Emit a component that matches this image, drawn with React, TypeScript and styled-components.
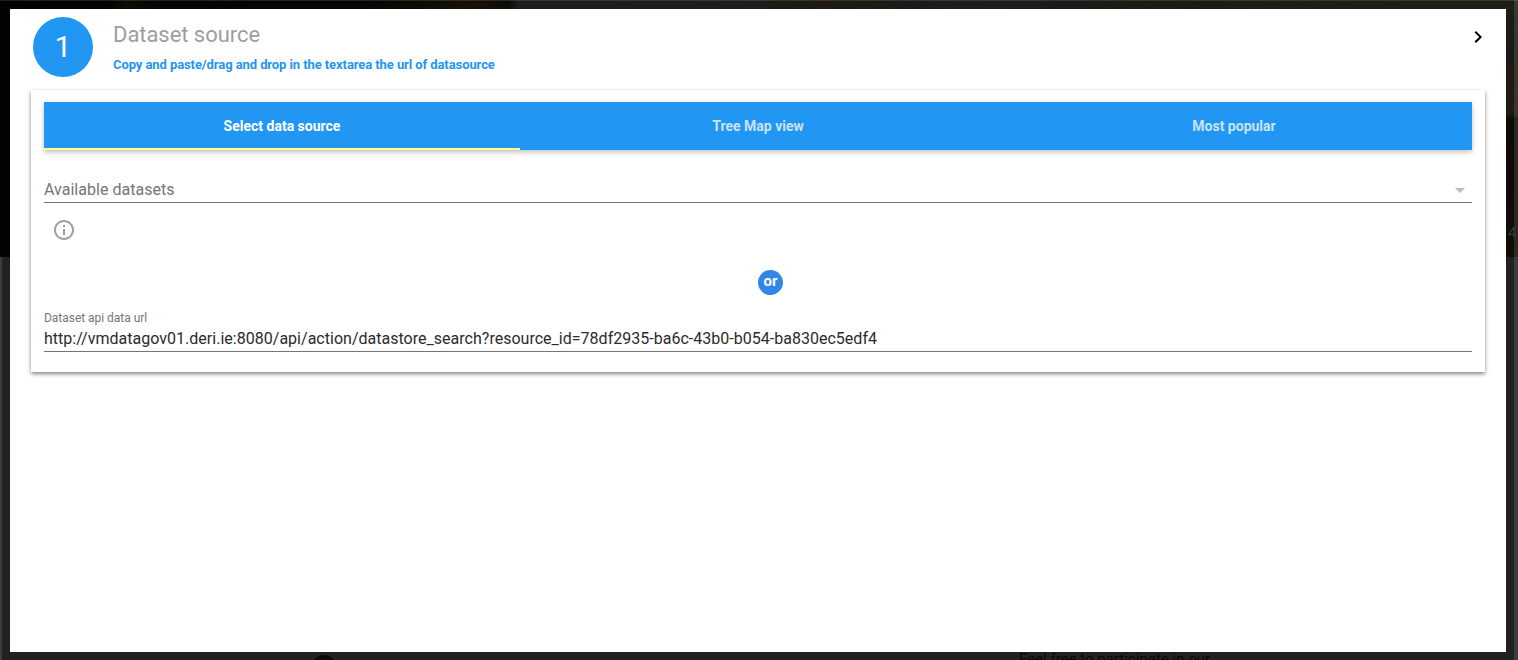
import React from 'react';
import styled, { createGlobalStyle } from 'styled-components';

const Global = createGlobalStyle`
  * { box-sizing: border-box; }
  body { margin: 0; overflow: hidden; font-family: Roboto, "Liberation Sans", sans-serif; }
`;

const Page = styled.div`
  position: relative;
  height: 660px;
  padding: 9px 12px 8px 10px;
  background: #212121;
  overflow: hidden;
`;

const Hero = styled.div`
  position: absolute;
  inset: 0 0 auto 0;
  height: 257px;
  background:
    linear-gradient(to bottom, #1e1e18 0, #1b1a14 50px, #221b13 115px, #0e0c07 118px, #100c06 100%) right / 12px 100% no-repeat,
    linear-gradient(to right, #020202 0, #030303 110px, #0d0c05 125px, #050504 160px, #060604 370px, #171206 480px, #0c0a06 508px, #1c1d1d 518px, #1d1d1b 720px, #1f1a14 820px, #1c1c1a 960px, #1e1b16 1160px, #1e1e18 100%);
`;

const Edge = styled.div<{ $side: 'left' | 'right' | 'top' }>`
  position: absolute;
  background: rgba(255, 255, 255, 0.12);
  ${({ $side }) =>
    $side === 'left'
      ? 'left: 0; top: 257px; bottom: 0; width: 2px;'
      : $side === 'right'
        ? 'right: 0; top: 0; bottom: 0; width: 4px;'
        : 'left: 0; right: 0; top: 0; height: 1px;'}
`;

const BehindText = styled.span<{ $x: number; $y: number; $size: number; $color: string }>`
  position: absolute;
  left: ${p => p.$x}px;
  top: ${p => p.$y}px;
  font-size: ${p => p.$size}px;
  line-height: 1;
  white-space: nowrap;
  color: ${p => p.$color};
`;

const BehindIcon = styled.svg`
  position: absolute;
  left: 311px;
  top: 654px;
`;

const Dialog = styled.main`
  position: relative;
  height: 643px;
  padding: 8px 21px;
  background: #fff;
`;

const Header = styled.header`
  display: flex;
  height: 73px;
  padding-left: 2px;
`;

const StepNumber = styled.div`
  width: 60px;
  height: 60px;
  border-radius: 50%;
  background: #2196f3;
  color: #fff;
  font-size: 30px;
  line-height: 60px;
  text-align: center;
`;

const Titles = styled.div`
  flex: 1;
  padding: 4px 0 0 20px;
`;

const Title = styled.h1`
  margin: 0;
  font-size: 22px;
  font-weight: 400;
  line-height: 28px;
  letter-spacing: -0.05px;
  color: #9e9e9e;
`;

const Subtitle = styled.p`
  margin: 7px 0 0;
  font-size: 13px;
  font-weight: 700;
  line-height: 18px;
  letter-spacing: -0.083px;
  color: #2196f3;
`;

const NextButton = styled.button`
  width: 24px;
  height: 24px;
  margin: 8px -5px 0 0;
  padding: 0;
  border: 0;
  background: none;
`;

const Card = styled.section`
  height: 282px;
  padding: 12px 13px;
  background: #fff;
  box-shadow: 0 2px 4px 0 rgba(0, 0, 0, 0.48);
`;

const Tabs = styled.nav`
  display: flex;
  height: 48px;
  background: #2196f3;
  box-shadow: 0 2px 5px 0 rgba(0, 0, 0, 0.26);
`;

const Tab = styled.button<{ $active?: boolean }>`
  flex: 1;
  padding: 2px 0 0;
  border: 0;
  border-bottom: 2px solid ${p => (p.$active ? '#ffff8d' : 'transparent')};
  background: none;
  color: ${p => (p.$active ? '#fff' : 'rgba(255, 255, 255, 0.77)')};
  font: 700 14px Roboto, sans-serif;
`;

const Select = styled.div`
  display: flex;
  align-items: center;
  justify-content: space-between;
  height: 27px;
  margin-top: 26px;
  padding-right: 7px;
  border-bottom: 1px solid #757575;
  color: #757575;
  font-size: 16px;
  letter-spacing: 0.02px;
`;

const Caret = styled.svg`
  margin-top: 3px;
`;

const InfoIcon = styled.svg`
  display: block;
  margin: 15px 0 0 8px;
`;

const Divider = styled.div`
  display: flex;
  justify-content: center;
  margin-top: 28px;
  padding-left: 25px;
`;

const Or = styled.span`
  width: 25px;
  height: 25px;
  border-radius: 50%;
  background: #3187e8;
  color: #fff;
  font-size: 15px;
  font-weight: 700;
  line-height: 23px;
  text-align: center;
`;

const Field = styled.div`
  display: flex;
  flex-direction: column;
  margin-top: 15px;
`;

const Label = styled.label`
  font-size: 12px;
  line-height: 16px;
  letter-spacing: -0.03px;
  color: #757575;
`;

const Input = styled.input`
  height: 26px;
  padding: 0;
  border: 0;
  border-bottom: 1px solid #757575;
  outline: 0;
  font: 400 16px Roboto, sans-serif;
  letter-spacing: 0.017px;
  color: #2b2b2b;
`;

const URL_VALUE =
  'http://vmdatagov01.deri.ie:8080/api/action/datastore_search?resource_id=78df2935-ba6c-43b0-b054-ba830ec5edf4';

export default function App() {
  return (
    <Page>
      <Global />
      <Hero />
      <Edge $side="left" />
      <Edge $side="right" />
      <Edge $side="top" />
      <BehindText $x={1508} $y={226} $size={15} $color="#393734">4</BehindText>
      <BehindText $x={1019} $y={652} $size={15} $color="#090909">Feel free to participate in our</BehindText>
      <BehindIcon width="26" height="26" viewBox="0 0 26 26" fill="none" stroke="#080808" strokeWidth="2">
        <circle cx="13" cy="13" r="11" />
        <path d="M8 4.500h10" />
      </BehindIcon>
      <Dialog>
        <Header>
          <StepNumber>1</StepNumber>
          <Titles>
            <Title>Dataset source</Title>
            <Subtitle>Copy and paste/drag and drop in the textarea the url of datasource</Subtitle>
          </Titles>
          <NextButton aria-label="Next">
            <svg width="24" height="24" viewBox="0 0 24 24">
              <path d="M8.6 16.3 13.2 12 8.6 7.4 10 6l6 6-6 6z" fill="#000" />
            </svg>
          </NextButton>
        </Header>
        <Card>
          <Tabs>
            <Tab $active>Select data source</Tab>
            <Tab>Tree Map view</Tab>
            <Tab>Most popular</Tab>
          </Tabs>
          <Select>
            Available datasets
            <Caret width="10" height="5" viewBox="0 0 10 5">
              <path d="M0 0h10L5 5z" fill="#bdbdbd" />
            </Caret>
          </Select>
          <InfoIcon width="24" height="24" viewBox="0 0 24 24">
            <path
              d="M11 17h2v-6h-2v6zm1-15C6.48 2 2 6.480 2 12s4.480 10 10 10 10-4.480 10-10S17.520 2 12 2zm0 18c-4.410 0-8-3.590-8-8s3.590-8 8-8 8 3.590 8 8-3.590 8-8 8zM11 9h2V7h-2v2z"
              fill="#9e9e9e"
            />
          </InfoIcon>
          <Divider>
            <Or>or</Or>
          </Divider>
          <Field>
            <Label htmlFor="api-url">Dataset api data url</Label>
            <Input id="api-url" defaultValue={URL_VALUE} />
          </Field>
        </Card>
      </Dialog>
    </Page>
  );
}
